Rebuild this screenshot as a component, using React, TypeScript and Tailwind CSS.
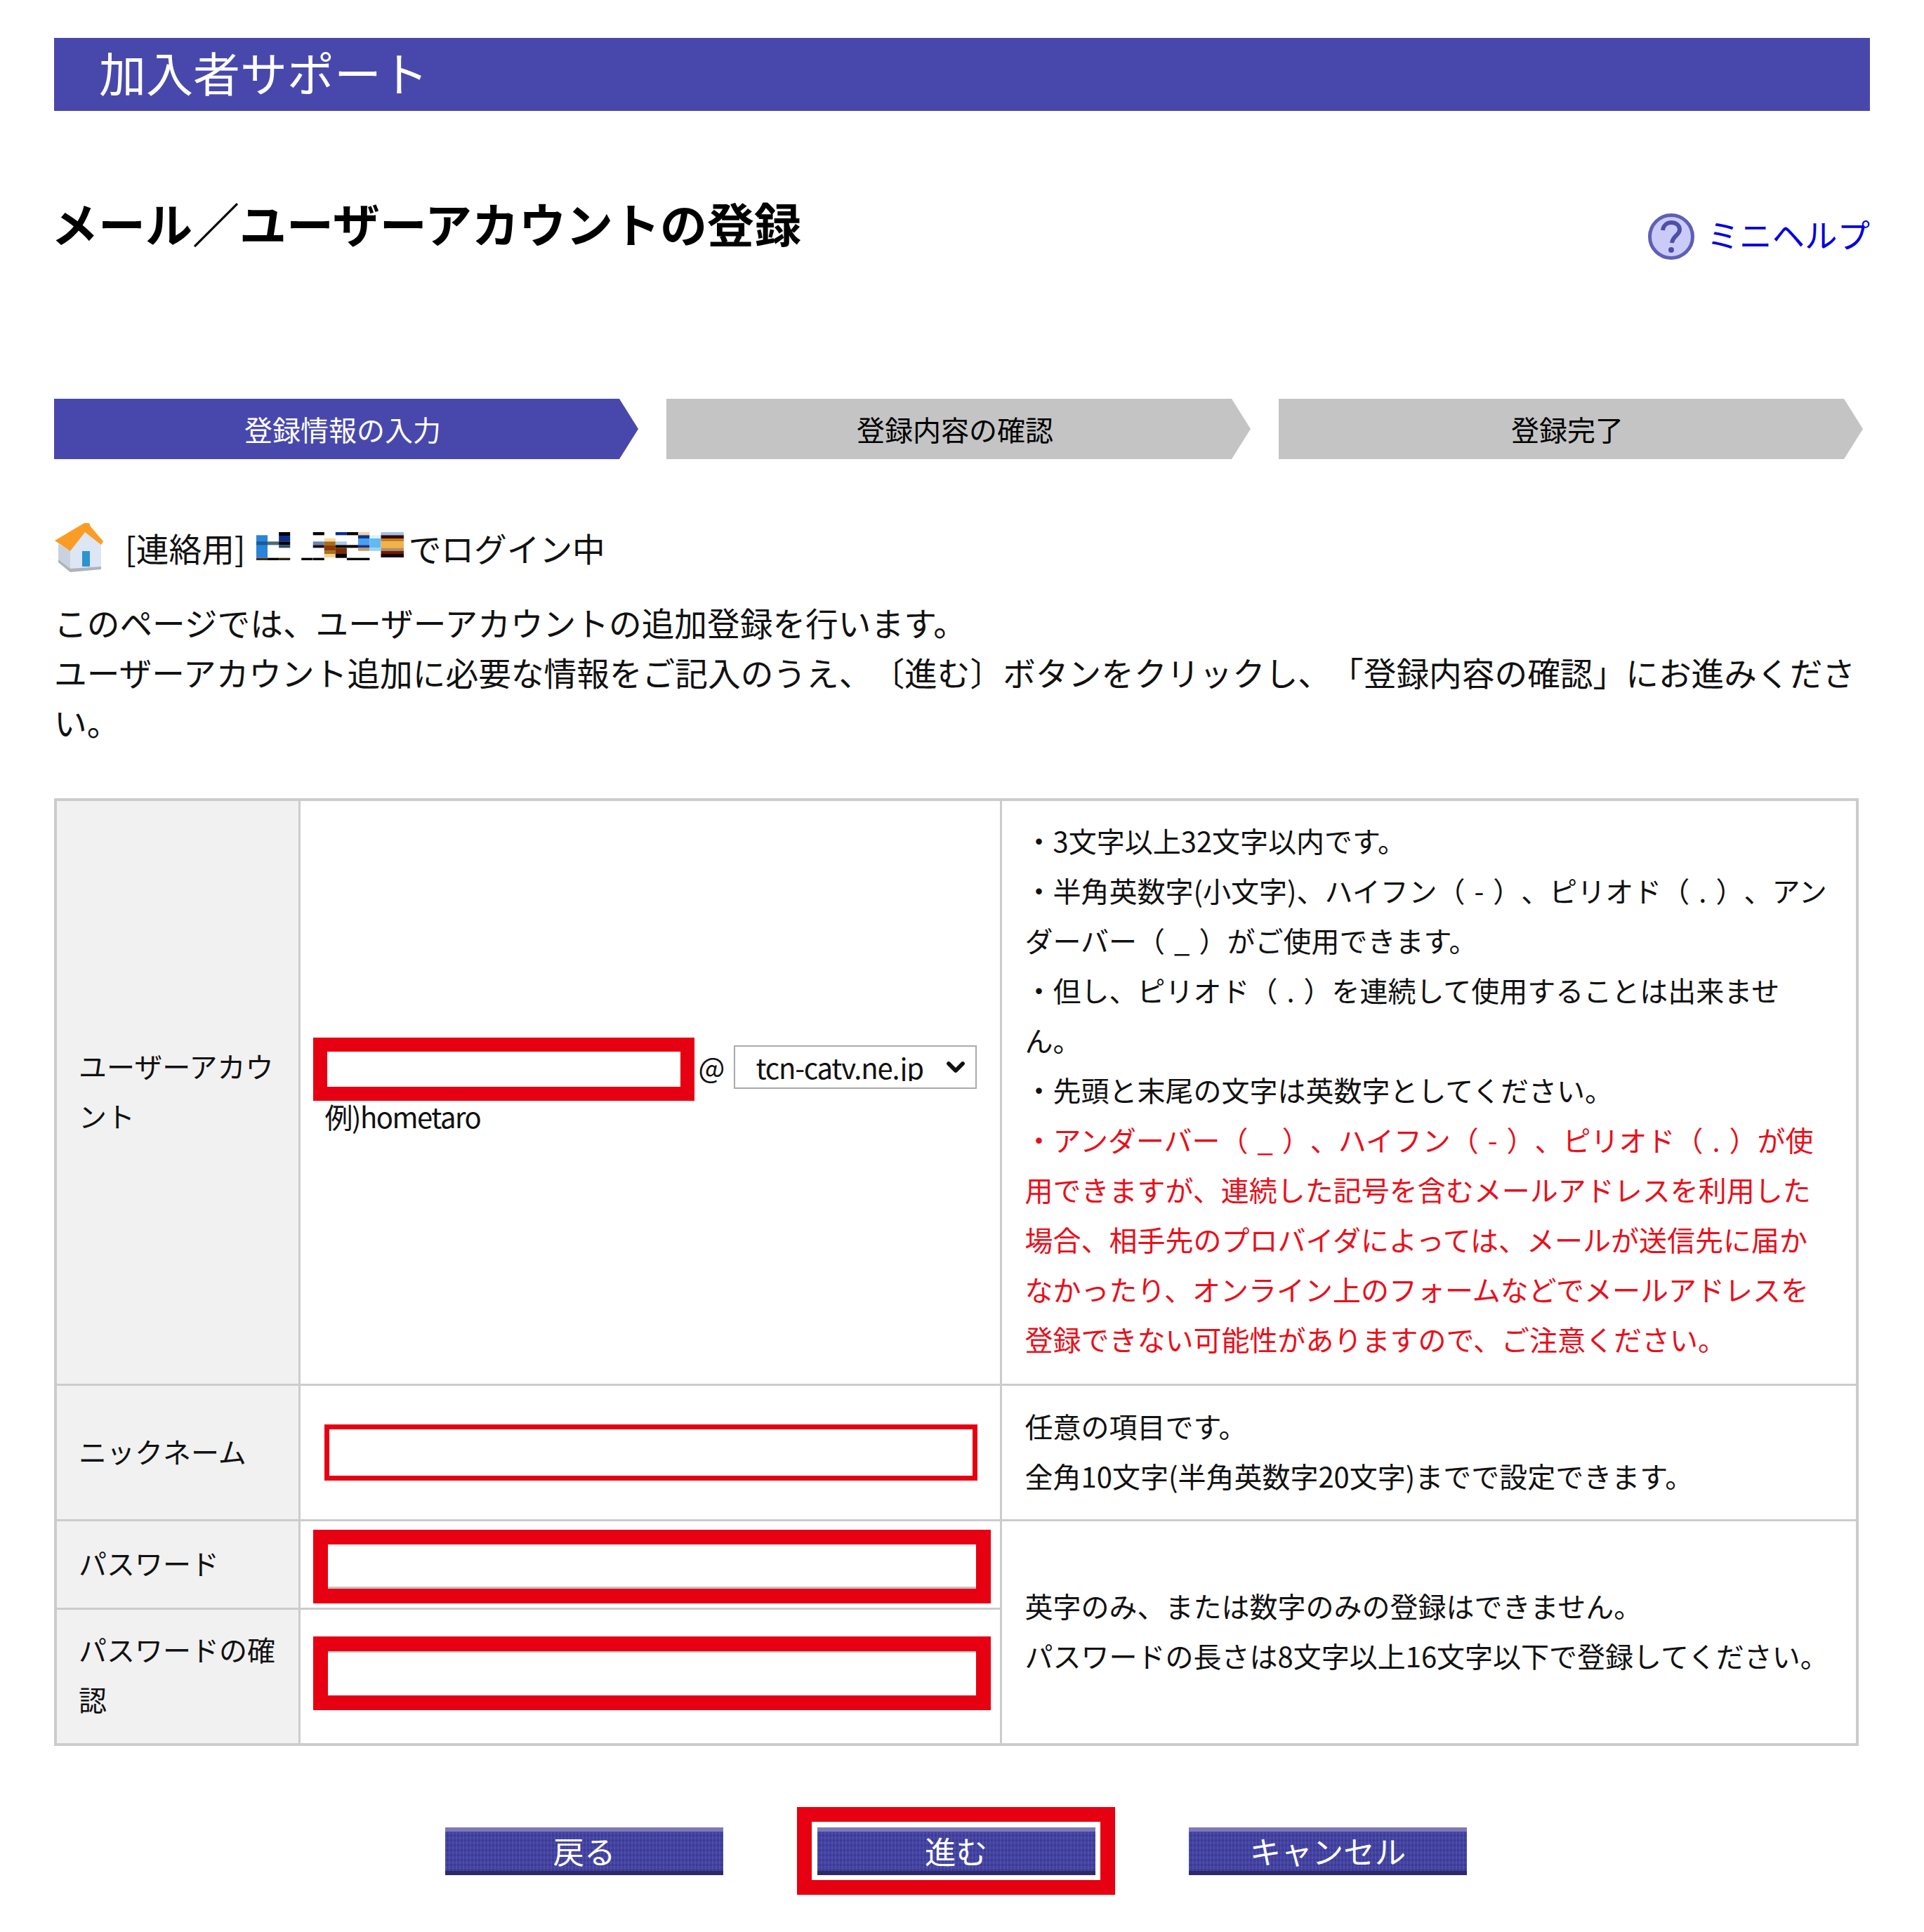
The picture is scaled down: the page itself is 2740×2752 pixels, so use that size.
import { ChevronDown } from "lucide-react";

const notes = [
    "・3文字以上32文字以内です。",
    "・半角英数字(小文字)、ハイフン（ - ）、ピリオド（ . ）、アン",
    "ダーバー（ _ ）がご使用できます。",
    "・但し、ピリオド（ . ）を連続して使用することは出来ませ",
    "ん。",
    "・先頭と末尾の文字は英数字としてください。",
];

const redNotes = [
    "・アンダーバー（ _ ）、ハイフン（ - ）、ピリオド（ . ）が使",
    "用できますが、連続した記号を含むメールアドレスを利用した",
    "場合、相手先のプロバイダによっては、メールが送信先に届か",
    "なかったり、オンライン上のフォームなどでメールアドレスを",
    "登録できない可能性がありますので、ご注意ください。",
];

// blurred-out account name, coordinates are just the mosaic cells
const mosaic: [number, number, number, number, string][] = [
    [0, 13, 42, 97, "#2b84d8"], [0, 40, 42, 15, "#1a5a9a"], [0, 110, 42, 10, "#4a2a14"],
    [42, 40, 42, 15, "#4f6b70"], [42, 110, 42, 10, "#000000"],
    [84, 0, 42, 15, "#000000"], [84, 15, 42, 25, "#0a2f8f"], [84, 40, 42, 15, "#000000"], [84, 55, 42, 12, "#2b4a6b"], [84, 110, 42, 10, "#2a2410"],
    [168, 110, 42, 10, "#000000"],
    [211, 0, 42, 13, "#000000"], [211, 40, 42, 15, "#6a85b5"], [211, 55, 42, 12, "#1a0a10"], [211, 110, 42, 10, "#000000"],
    [253, 27, 42, 13, "#fbd79a"], [253, 40, 42, 15, "#a86a15"], [253, 55, 42, 25, "#8a3c05"], [253, 80, 42, 13, "#a8701c"], [253, 93, 42, 15, "#fbd08a"],
    [295, 0, 42, 13, "#0a2f8f"], [295, 40, 42, 15, "#a5cbe8"], [295, 55, 42, 12, "#000000"], [295, 67, 42, 26, "#7a2c05"], [295, 93, 42, 17, "#000000"],
    [337, 0, 42, 13, "#000000"], [337, 55, 42, 12, "#000000"], [337, 110, 42, 10, "#000000"],
    [379, 0, 43, 13, "#f5cf9f"], [379, 13, 43, 14, "#0a3590"], [379, 27, 43, 28, "#4aa0ee"], [379, 55, 43, 12, "#0a3590"], [379, 67, 43, 13, "#c09a60"], [379, 110, 43, 10, "#000000"],
    [422, 13, 42, 14, "#d5f5fa"], [422, 27, 42, 40, "#63b8f5"], [422, 67, 42, 13, "#8fd5fa"],
    [464, 0, 85, 13, "#9fc0e8"], [464, 13, 85, 14, "#3a0505"], [464, 27, 85, 13, "#c0801a"], [464, 40, 85, 27, "#f5b04a"], [464, 67, 85, 13, "#b09060"], [464, 80, 85, 13, "#701a05"], [464, 93, 85, 15, "#150015"],
];

function Step({ label, active }: { label: string; active?: boolean }) {
    return (
        <div className={`flex h-[86px] w-[832px] items-center justify-center pr-[10px] text-[40px] [clip-path:polygon(0_0,805px_0,832px_50%,805px_100%,0_100%)] ${active ? "bg-[#4848ac] text-white" : "bg-[#c4c4c4] text-black"}`}>
            {label}
        </div>
    );
}

function PageButton({ label }: { label: string }) {
    return (
        <button className="block h-[68px] w-[396px] border-t-[6px] border-b-[6px] border-t-[#7d79b9] border-b-[#2e2a6a] bg-[#4040a4] bg-[repeating-linear-gradient(90deg,#ffffff0c_0,#ffffff0c_2px,#0000000c_2px,#0000000c_5px),repeating-linear-gradient(0deg,#0000000a_0,#0000000a_3px,#ffffff08_3px,#ffffff08_7px)] text-[44.5px] leading-none text-white">
            {label}
        </button>
    );
}

export default function App() {
    return (
        <div className="h-[2752px] w-[2740px] overflow-hidden bg-white px-[77px] pt-[54px] text-[46.7px] leading-[71px] text-[#111] [font-family:'Noto_Sans_CJK_JP','Noto_Sans',sans-serif] [text-spacing-trim:space-all]">
            <div className="flex h-[104px] items-center bg-[#4848ac] pb-[10px] pl-[64px] text-[67px] text-white">加入者サポート</div>

            <div className="mt-[112px] flex h-[120px] items-start justify-between">
                <h1 className="ml-[-4px] mt-[-3px] text-[67px] leading-[100px] font-bold text-black">メール／ユーザーアカウントの登録</h1>
                <a className="mt-[25px] flex items-center gap-[18px] text-[46.5px] leading-[68px] text-[#0000e0]">
                    <svg width="66" height="68" viewBox="0 0 66 68" className="mt-[8px]">
                        <circle cx="33" cy="34" r="30.5" fill="#cbcbfa" stroke="#5f5fb4" strokeWidth="5" />
                        <path d="M21 25c1-8 7-11 12-11 7 0 12 4 12 10 0 8-10 9-11 19" fill="none" stroke="#4f4fa6" strokeWidth="6" />
                        <circle cx="33" cy="53" r="4" fill="#4f4fa6" />
                    </svg>
                    ミニヘルプ
                </a>
            </div>

            <div className="mt-[178px] flex gap-[40px]">
                <Step label="登録情報の入力" active />
                <Step label="登録内容の確認" />
                <Step label="登録完了" />
            </div>

            <div className="mt-[90px] flex h-[71px] items-center">
                <svg width="72" height="70" viewBox="0 0 72 70" className="mr-[29px] shrink-0 blur-[0.6px]">
                    <path d="M6 28 44 13l23 17v35l-44 3-17-15z" fill="#dde6f4" />
                    <path d="M6 30l17 10v28L6 53z" fill="#c8d2e0" />
                    <path d="M6 52l17 13 44-3v4l-44 4L6 56z" fill="#aeb4b6" />
                    <path d="M40 40h11v22H40z" fill="#2c93d0" />
                    <path d="M43 0h7l2 5 18 21-3 5-23-18-21 27L1 25z" fill="#fb9d24" />
                </svg>
                <span>[連絡用]</span>
                <svg width="210" height="40" viewBox="0 0 549 120" preserveAspectRatio="none" className="mx-[15px] mt-[-4px] shrink-0">
                    {mosaic.map(([x, y, w, h, fill], i) => (
                        <rect key={i} x={x} y={y} width={w} height={h} fill={fill} />
                    ))}
                </svg>
                <span className="ml-[-8px]">でログイン中</span>
            </div>

            <p className="mt-[35px]">
                このページでは、ユーザーアカウントの追加登録を行います。
                <br />
                ユーザーアカウント追加に必要な情報をご記入のうえ、〔進む〕ボタンをクリックし、「登録内容の確認」にお進みください。
            </p>

            <table className="mt-[74px] w-[2566px] table-fixed border-collapse border-[4px] border-[#ccc] text-[40px]">
                <colgroup>
                    <col className="w-[347px]" />
                    <col className="w-[999px]" />
                    <col className="w-[1220px]" />
                </colgroup>
                <tbody>
                    <tr className="h-[833px]">
                        <th className="border-[3px] border-[#ccc] bg-[#f1f1f1] pb-[4px] pl-[31px] text-left font-normal">ユーザーアカウ<br />ント</th>
                        <td className="border-[3px] border-[#ccc] pb-[8px] pl-[18px] align-middle">
                            <div className="flex items-center">
                                <input className="h-[90px] w-[543px] border-[20px] border-[#e60012] bg-white" />
                                <span className="ml-[6px] mt-[-6px] w-[50px]">@</span>
                                <div className="relative mt-[-6px]">
                                    <select className="block h-[62px] w-[346px] appearance-none border-[2px] border-[#aaa] bg-white pl-[30px] text-[40px] leading-none tracking-[-1.2px]">
                                        <option>tcn-catv.ne.jp</option>
                                    </select>
                                    <ChevronDown size={40} strokeWidth={3.5} className="absolute top-[11px] right-[10px]" />
                                </div>
                            </div>
                            <div className="mt-[-13px] pl-[17px] tracking-[-1.5px]">例)hometaro</div>
                        </td>
                        <td className="border-[3px] border-[#ccc] pb-[6px] pl-[33px] align-middle whitespace-nowrap [word-spacing:4px]">
                            {notes.map((n) => <div key={n}>{n}</div>)}
                            {redNotes.map((n) => <div key={n} className="text-[#e8101c]">{n}</div>)}
                        </td>
                    </tr>
                    <tr className="h-[193px]">
                        <th className="border-[3px] border-[#ccc] bg-[#f1f1f1] pb-[3px] pl-[31px] text-left font-normal">ニックネーム</th>
                        <td className="border-[3px] border-[#ccc] pl-[34px] align-middle">
                            <input className="block h-[80px] w-[930px] border-[7px] border-[#e60012] bg-white" />
                        </td>
                        <td className="border-[3px] border-[#ccc] pb-[3px] pl-[33px] align-middle whitespace-nowrap">
                            <div>任意の項目です。</div>
                            <div>全角10文字(半角英数字20文字)までで設定できます。</div>
                        </td>
                    </tr>
                    <tr className="h-[126px]">
                        <th className="border-[3px] border-[#ccc] bg-[#f1f1f1] pb-[4px] pl-[31px] text-left font-normal">パスワード</th>
                        <td className="border-[3px] border-[#ccc] pt-[6px] pl-[18px] align-middle">
                            <input type="password" className="block h-[105px] w-[965px] border-[21px] border-[#e60012] bg-white shadow-[inset_0_-3px_0_#c4c4c4]" />
                        </td>
                        <td rowSpan={2} className="border-[3px] border-[#ccc] pb-[3px] pl-[33px] align-middle whitespace-nowrap">
                            <div>英字のみ、または数字のみの登録はできません。</div>
                            <div>パスワードの長さは8文字以上16文字以下で登録してください。</div>
                        </td>
                    </tr>
                    <tr className="h-[194px]">
                        <th className="border-[3px] border-[#ccc] bg-[#f1f1f1] pb-[6px] pl-[31px] text-left font-normal">パスワードの確<br />認</th>
                        <td className="border-[3px] border-[#ccc] pb-[8px] pl-[18px] align-middle">
                            <input type="password" className="block h-[105px] w-[965px] border-[21px] border-[#e60012] bg-white shadow-[inset_0_2px_0_#c4c4c4]" />
                        </td>
                    </tr>
                </tbody>
            </table>

            <div className="mt-[87px] flex items-center justify-center gap-[105px] pr-[17px]">
                <PageButton label="戻る" />
                <div className="border-[21px] border-[#e60012] bg-white px-[7.5px] py-[7.5px]">
                    <PageButton label="進む" />
                </div>
                <PageButton label="キャンセル" />
            </div>
        </div>
    );
}
